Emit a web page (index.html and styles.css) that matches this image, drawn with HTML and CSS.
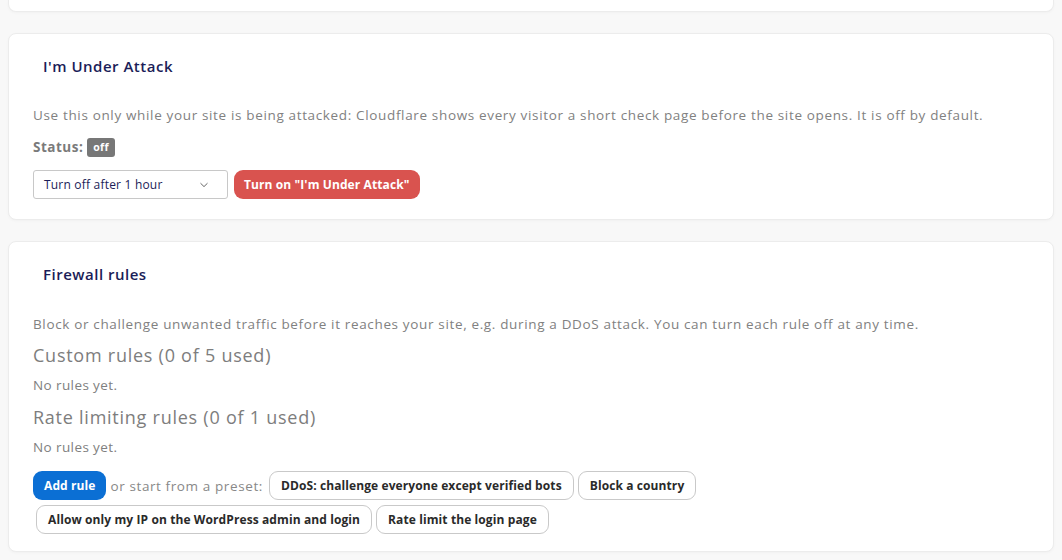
FILE: index.html
```html
<!DOCTYPE html>
<html lang="en">
<head>
<meta charset="utf-8">
<title>Security</title>
<link rel="stylesheet" href="styles.css">
</head>
<body>
<div class="page">
  <div class="card card-cut"></div>

  <section class="card">
    <h2 class="card-title">I'm Under Attack</h2>
    <div class="card-body">
      <p class="desc">Use this only while your site is being attacked: Cloudflare shows every visitor a short check page before the site opens. It is off by default.</p>
      <p class="status"><span class="status-label">Status:</span> <span class="badge">off</span></p>
      <div class="controls">
        <div class="select">
          <span>Turn off after 1 hour</span>
          <svg class="chev" width="10" height="6" viewBox="0 0 10 6"><path d="M1.5 1.2l3.5 3.4 3.5-3.4" fill="none" stroke="#666" stroke-width="1"/></svg>
        </div>
        <button class="btn btn-red">Turn on "I'm Under Attack"</button>
      </div>
    </div>
  </section>

  <section class="card">
    <h2 class="card-title">Firewall rules</h2>
    <div class="card-body card-body-last">
      <p class="desc">Block or challenge unwanted traffic before it reaches your site, e.g. during a DDoS attack. You can turn each rule off at any time.</p>
      <h3 class="sub">Custom rules (0 of 5 used)</h3>
      <p class="empty">No rules yet.</p>
      <h3 class="sub">Rate limiting rules (0 of 1 used)</h3>
      <p class="empty">No rules yet.</p>
      <div class="actions">
        <button class="btn btn-blue">Add rule</button>
        <span class="or">or start from a preset:</span>
        <button class="btn btn-preset">DDoS: challenge everyone except verified bots</button>
        <button class="btn btn-preset">Block a country</button>
        <button class="btn btn-preset btn-row2">Allow only my IP on the WordPress admin and login</button>
        <button class="btn btn-preset">Rate limit the login page</button>
      </div>
    </div>
  </section>
</div>
</body>
</html>
```

FILE: styles.css
```css
* { box-sizing: border-box; }
html, body { margin: 0; padding: 0; }
body {
  background: #f8f8f8;
  font-family: "Open Sans", "Liberation Sans", sans-serif;
  color: #808080;
  width: 1062px;
  height: 560px;
  overflow: hidden;
}
.page {
  padding: 0 8px;
  display: flex;
  flex-direction: column;
  gap: 21px;
}
.card {
  background: #fff;
  border: 1px solid #ececec;
  border-radius: 8px;
  box-shadow: 0 1px 3px rgba(0,0,0,0.03);
}
.card-cut {
  height: 12px;
  border-top: none;
  border-radius: 0 0 8px 8px;
}
.card-title {
  margin: 0;
  padding: 22px 34px 0 34px;
  font-size: 15px;
  font-weight: 600;
  letter-spacing: 0.5px;
  color: #1b1d58;
  line-height: 20px;
}
.card-body {
  padding: 29px 24px 20px 24px;
}
.card-body-last {
  padding-top: 30px;
  padding-bottom: 17px;
}
.desc {
  margin: 0;
  font-size: 13.5px;
  letter-spacing: 0.65px;
  line-height: 20px;
  color: #818181;
}
.status {
  margin: 12px 0 0 0;
  font-size: 13.5px;
  line-height: 20px;
  display: flex;
  align-items: center;
  gap: 4px;
}
.status-label { font-weight: 700; color: #7a7a7a; letter-spacing: 0.5px; }
.badge {
  display: inline-block;
  background: #777;
  color: #fff;
  font-size: 10.5px;
  font-weight: 700;
  letter-spacing: 0.3px;
  line-height: 19px;
  padding: 0 6px;
  border-radius: 3px;
}
.controls {
  margin-top: 13px;
  display: flex;
  gap: 6px;
  align-items: center;
}
.select {
  width: 195px;
  height: 29px;
  border: 1px solid #c8c8c8;
  border-radius: 3px;
  display: flex;
  align-items: center;
  justify-content: space-between;
  padding: 0 18px 0 10px;
  font-size: 12px;
  letter-spacing: 0.2px;
  color: #1b1d58;
}
.btn {
  font-family: inherit;
  font-weight: 700;
  font-size: 12px;
  letter-spacing: 0.1px;
  border-radius: 9px;
  height: 29px;
  padding: 0 11px;
  cursor: pointer;
  flex: none;
}
.btn-red {
  background: #d9534f;
  color: #fff;
  border: none;
  padding: 0 10px;
}
.btn-blue {
  background: #0b6fd4;
  color: #fff;
  border: none;
}
.btn-preset {
  background: #fff;
  color: #2a2a2a;
  border: 1px solid #c9c9c9;
}
.btn-row2 { margin-left: 3px; }
.sub {
  margin: 9px 0 0 0;
  font-size: 18px;
  font-weight: 500;
  letter-spacing: 0.75px;
  color: #7d7d7d;
  line-height: 24px;
}
.sub + .empty { margin-top: 8px; }
.empty + .sub { margin-top: 10px; }
.empty {
  margin: 8px 0 0 0;
  font-size: 13.5px;
  letter-spacing: 0.4px;
  line-height: 20px;
  color: #808080;
}
.actions {
  margin-top: 14px;
  display: flex;
  flex-wrap: wrap;
  align-items: center;
  column-gap: 4px;
  row-gap: 5px;
}
.or {
  font-size: 13.5px;
  letter-spacing: 0.6px;
  color: #888;
  margin-right: 2px;
}
```
